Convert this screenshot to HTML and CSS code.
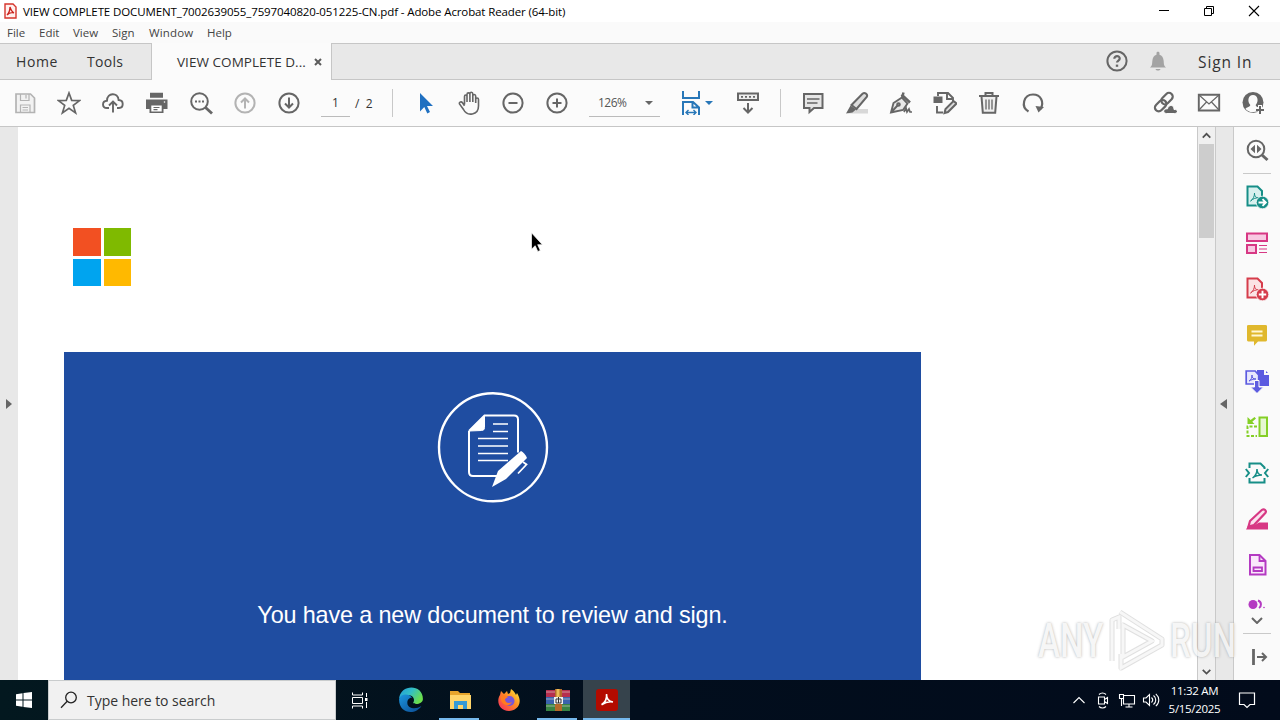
FILE: index.html
```html
<!DOCTYPE html>
<html lang="en">
<head>
<meta charset="UTF-8">
<meta name="viewport" content="width=device-width, initial-scale=1.0">
<title>VIEW COMPLETE DOCUMENT_7002639055_7597040820-051225-CN.pdf - Adobe Acrobat Reader (64-bit)</title>
<link rel="stylesheet" href="styles.css">
</head>
<body>
  <div class="screen">
    <!-- Title bar -->
    <header class="titlebar">
      <svg class="app-icon" viewBox="0 0 13 16" width="13" height="16"><path d="M1 1h8l3 3v11H1z" fill="#fff0ee" stroke="#d5352d" stroke-width="1.4"/><path d="M6 4c1 3 2 5 4 6-3-1-5 0-7 2 2-2 3-5 3-8z" fill="none" stroke="#c9221c" stroke-width="1.3"/></svg>
      <span class="title">VIEW COMPLETE DOCUMENT_7002639055_7597040820-051225-CN.pdf - Adobe Acrobat Reader (64-bit)</span>
      <div class="window-buttons">
        <svg viewBox="0 0 12 12"><path d="M1 5.5h10" stroke="#000"/></svg>
        <svg viewBox="0 0 12 12"><path d="M1.500 3.500h7v7h-7zM3.500 3.500v-2h7v7h-2" fill="none" stroke="#000"/></svg>
        <svg viewBox="0 0 12 12"><path d="M1 1l10 10M11 1L1 11" stroke="#000" stroke-width="1.100"/></svg>
      </div>
    </header>
    <nav class="menu">
      <span class="m-file">File</span>
      <span class="m-edit">Edit</span>
      <span class="m-view">View</span>
      <span class="m-sign">Sign</span>
      <span class="m-window">Window</span>
      <span class="m-help">Help</span>
    </nav>

    <!-- Tabs -->
    <div class="tabs">
      <span class="tab-home">Home</span>
      <span class="tab-tools">Tools</span>
      <div class="tab-active">
        <span class="tab-name">VIEW COMPLETE D...</span>
        <svg viewBox="0 0 8 8" width="8" height="8"><path d="M1 1l6 6M7 1L1 7" stroke="#5c5c5c" stroke-width="2"/></svg>
      </div>
      <div class="account">
        <svg class="icon" viewBox="0 0 24 24"><circle cx="12" cy="12" r="9.600"/><path d="M9.300 9.800c0-3.600 5.600-3.400 5.400-.2-.1 2-2.700 1.900-2.700 4" stroke-width="2.200"/><path d="M12 15.600v2.200" stroke-width="2.400"/></svg>
        <svg class="icon bell" viewBox="0 0 24 24"><path d="M4 18.500c2.500-2 2-4 2.400-7 .3-3 1.600-5 4.100-5.700V4c0-1.800 3-1.800 3 0v1.800c2.500.7 3.800 2.700 4.100 5.700.4 3-.1 5 2.400 7zM9.500 20h5c-.6 2-4.400 2-5 0z"/></svg>
        <span class="sign-in">Sign In</span>
      </div>
    </div>

    <!-- Toolbar -->
    <div class="toolbar">
      <div class="group">
        <svg class="icon pale" viewBox="0 0 24 24"><path d="M3 3h14.500L21.500 7V21.500H3z" fill="#f2f2f2" stroke-width="1.700"/><path d="M7.500 3v6.500h8.500V3M13 4v3.500M7.500 21.500V14H17v7.500M9.500 16.500h5.500M9.500 19h5.500" stroke-width="1.200"/></svg>
        <svg class="icon" viewBox="0 0 24 24"><path d="M12 2l2.700 7.400 7.900.2-6.300 4.800 2.300 7.500L12 17.400l-6.600 4.500 2.300-7.500L1.400 9.600l7.900-.2z" stroke-width="1.700"/></svg>
        <svg class="icon" viewBox="0 0 24 24"><path d="M8 17H6c-5.300-.2-5.300-7 0-7.300C6 1.500 17 1 17.600 9c5.500.2 5.300 7.800.4 8h-2M12 21.500V11M8 14.500l4-4 4 4" stroke-width="1.900"/></svg>
        <svg class="icon" viewBox="0 0 24 24"><path d="M5 1.800h13v5H5zM1 8.500h21.500V18H18.500v4H4.500v-4H1z" fill="#666" stroke="none"/><path d="M6.300 14.500h10.400v6H6.300z" fill="#fff" stroke="none"/><path d="M8.500 16.500h6M8.500 18.700h4" stroke-width="1.200"/><circle cx="19.500" cy="11" r=".8" fill="#fff" stroke="none"/></svg>
        <svg class="icon" viewBox="0 0 24 24"><circle cx="10.500" cy="10.500" r="8.300"/><path d="M16.500 16.500l6.500 6" stroke-width="2.800"/><path d="M6 10.500h2m1.500 0h2m1.500 0h2" stroke-width="2"/></svg>
        <svg class="icon pale" viewBox="0 0 24 24"><circle cx="12" cy="12" r="9.600"/><path d="M12 17.500v-10M8 11.500l4-4 4 4"/></svg>
        <svg class="icon" viewBox="0 0 24 24"><circle cx="12" cy="12" r="9.600"/><path d="M12 6.500v10M8 12.500l4 4 4-4"/></svg>
      </div>
      <span class="page-input">1</span>
      <span class="page-total">/&nbsp; 2</span>
      <i class="divider"></i>
      <div class="group group-view">
        <svg class="icon" viewBox="0 0 24 24"><path d="M7 2v18.500l4.300-4.500 3 6.400 2.700-1.300-3-6.100h6z" fill="#1f70c1" stroke="none"/></svg>
        <svg class="icon" viewBox="0 0 24 24"><path d="M7.500 13.500V5.500c0-2 2.500-2 2.500 0V11 3.500c0-2.200 2.900-2.200 2.900 0V11 2.800c0-2 2.900-2 2.900.2V11 5c0-2 2.900-2 2.900.2V12 8.500c0-2 2.800-2 2.800 0V15c0 9.500-11.500 10.500-15 3.500L2.500 13c-.7-2.300 2-2.700 3-1.200l2 3" stroke-width="1.600"/></svg>
        <svg class="icon" viewBox="0 0 24 24"><circle cx="12" cy="12" r="9.600"/><path d="M7.500 12h9"/></svg>
        <svg class="icon" viewBox="0 0 24 24"><circle cx="12" cy="12" r="9.600"/><path d="M7.500 12h9M12 7.500v9"/></svg>
      </div>
      <div class="zoom-level"><span>126%</span><i class="caret"></i></div>
      <div class="fit">
        <svg class="icon" viewBox="0 0 24 24"><g stroke="#2877b8"><path d="M4 0v7h16V0M4 24V11h10l6 5.500V24M13.500 11v5.500H20"/><path d="M7 21.500h10M9.500 19L7 21.500 9.500 24M14.500 19l2.500 2.500-2.500 2.500" stroke-width="1.400"/></g></svg>
        <i class="caret blue"></i>
      </div>
      <svg class="icon scroll-icon" viewBox="0 0 24 24"><path d="M2 2.500h20V9H2z" fill="#eee"/><path d="M5 5.800h14.500" stroke-dasharray="2 2" stroke-width="1.700"/><path d="M12 12v9M7.500 17l4.500 4.500 4.500-4.500"/></svg>
      <i class="divider divider-2"></i>
      <div class="group group-edit">
        <svg class="icon" viewBox="0 0 24 24"><path d="M3 3h18.500v14H13l-4.500 4V17H3z" fill="#e6e6e6"/><path d="M6 8h12.500M6 12h10.500" stroke-width="1.500"/></svg>
        <svg class="icon" viewBox="0 0 24 24"><path d="M8 18h15v4.500H3z" fill="#d8d8d8" stroke="none"/><path d="M6.500 14L17.500 2.800c2-1.800 5.800.2 4.200 3.200L11.500 18z" fill="#ddd" stroke-width="2"/><path d="M5.500 14.500l5.500 4L7.500 21.500 1 22.500z" fill="#666" stroke="none"/></svg>
        <svg class="icon" viewBox="0 0 24 24"><path d="M2 21.500L4.500 12l8.500-5.500 5.500 6-4.500 6.500zM2 21.500l6.500-7" stroke-width="1.900" fill="#e8e8e8"/><path d="M12.500 3.500l8.500 8M14.500 1.500L13 7" stroke-width="2.500"/><circle cx="9.500" cy="13.500" r="1.300"/><path d="M15 21l2-4 1 4 2-3 1 3h2" stroke-width="1.700"/></svg>
        <svg class="icon" viewBox="0 0 24 24"><path d="M5 5V2h10l5 5v3M14 2v6h5M4 15v6.500h6" stroke-width="1.900"/><path d="M.5 5.500h9V12h-9z" fill="#666" stroke="none"/><path d="M11.500 22l1-4 8-8 3 2.500-8.500 8.500z" fill="#ddd" stroke-width="2"/></svg>
        <svg class="icon" viewBox="0 0 24 24"><path d="M4.500 5.500l1.300 16.200h12.400l1.300-16.200M2 5h20M8.500 4.500V2h7v2.500" fill="#eee"/><path d="M9 8.500v10M12 8.500v10M15 8.500v10" stroke-width="1.300"/></svg>
        <svg class="icon" viewBox="0 0 24 24"><path d="M7.500 20.500C-.5 16 2.500 3.500 12 3.500c8 0 11.500 8 7.500 14.500" stroke-width="2.200"/><path d="M14.500 15l8.500 1-5.500 5.500z" fill="#666" stroke="none"/></svg>
      </div>
      <div class="group group-share">
        <svg class="icon" viewBox="0 0 24 24"><g transform="rotate(-45 11 11)"><rect x="-.500" y="7.500" width="13" height="7.500" rx="3.700" stroke-width="2.200"/><rect x="9" y="7" width="13" height="7.500" rx="3.700" stroke-width="2.200"/></g><path d="M13.500 22.500c-4.500-.3-3-5.500 1-4.700 1-5 7-4 6.500.7 4.500-.3 4.500 4 .5 4z" fill="#666" stroke="#fbfbfb" stroke-width="1"/></svg>
        <svg class="icon" viewBox="0 0 24 24"><path d="M1.800 3.700h20.400v15.800H1.800z" stroke-width="1.900"/><path d="M2 4l10 9 10-9M2 19l7.500-8M22 19l-7.500-8" stroke-width="1.200"/></svg>
        <svg class="icon" viewBox="0 0 24 24"><circle cx="12" cy="11.500" r="10.500" fill="#666" stroke="none"/><path d="M4.500 18c1-2.200 4.500-1.500 4.800-4C6 10.500 7 4 12 4s6 6.500 2.700 10c.2 1.500 1.300 1.900 2.500 2.200L15 20.500c-4 1.500-8 .5-10.500-2.500z" fill="#fbfbfb" stroke="none"/><path d="M19 14v9M14.500 18.500h9" stroke="#fbfbfb" stroke-width="4"/><path d="M19 15v8M15 19h8"/></svg>
      </div>
    </div>

    <!-- Document area -->
    <main class="workspace">
      <div class="gutter-left"><i class="arrow-right"></i></div>
      <div class="page">
        <div class="ms-logo"><i class="red"></i><i class="green"></i><i class="sky"></i><i class="yellow"></i></div>
        <section class="banner">
          <svg class="sign-doc" viewBox="0 0 112 112" width="112" height="112" fill="none" stroke="#fff">
            <circle cx="56" cy="55.300" r="54" stroke-width="2.400"/>
            <path d="M32 39l15.500-15.500H77c3 0 4 1 4 4v33M32 39v41c0 3 1 4 4 4h26" stroke-width="2"/>
            <path d="M32 39l15.500-15.500v12c0 2-1 3-3 3z" fill="#fff" stroke-width="1"/>
            <path d="M56 32h15M56 39.500h15M41 46.500h30M41 54h30M41 61.500h30M41 68.500h30" stroke-width="1.500"/>
            <path d="M55 95l6-16 23-20c2 1 5 4 6 7L69 87z" fill="#fff" stroke="none"/>
            <path d="M86 70l3.500 2.500-8.500 9" stroke-width="1.800"/>
          </svg>
          <p>You have a new document to review and sign.</p>
        </section>
        <svg class="cursor" viewBox="0 0 12 20" width="12" height="20"><path d="M.5.8v16.400l3.700-3.500 2.600 5.800 2.500-1.100-2.600-5.700h4.700z" fill="#000" stroke="#fff" stroke-width=".7"/></svg>
      </div>
      <div class="scrollbar">
        <svg viewBox="0 0 18 18"><path d="M4.500 11.200L8.500 7.200l4 4"/></svg>
        <i class="thumb"></i>
        <svg class="down" viewBox="0 0 18 18"><path d="M4.500 7.300l4 4 4-4"/></svg>
      </div>
      <div class="gutter-right"><i class="arrow-left"></i></div>
      <aside class="tools">
        <svg class="icon first" viewBox="0 0 24 24"><circle cx="11" cy="11" r="8.300"/><path d="M17 17l5.500 5" stroke-width="3"/><path d="M10 6.700v8.600L5.500 11zM12 6.700v8.600l4.500-4.300z" fill="#666" stroke="none"/></svg>
        <hr>
        <div class="tool-list">
          <svg class="icon teal" viewBox="0 0 24 24"><path d="M2.500 1.500h10L17 6v14.500H2.500z" fill="#d8f0ee"/><path d="M5.500 16c3-2 4-5 4-8 0 4 2 5 5 5-4-.5-6 .5-9 3z" stroke-width="1"/><circle cx="17.500" cy="17.500" r="6.300" fill="#168e87" stroke="#fafafa" stroke-width=".8"/><path d="M13.500 17.500H20M17.500 14.200l3.300 3.300-3.300 3.300" stroke="#fff" stroke-width="1.900"/></svg>
          <svg class="icon pink" viewBox="0 0 24 24"><path d="M2 2.500h20v7.500H2zM2 14h9v8H2z" fill="#f8c9e2"/><path d="M14 14.500h8M14 18h8M14 21.500h8" stroke-width="1.200"/></svg>
          <svg class="icon coral" viewBox="0 0 24 24"><path d="M2.500 1.500h10L17 6v14.500H2.500z" fill="#fbe3e4"/><path d="M5.500 16c3-2 4-5 4-8 0 4 2 5 5 5-4-.5-6 .5-9 3z" stroke-width="1"/><circle cx="17.500" cy="17.500" r="6.300" fill="#d63c4b" stroke="#fafafa" stroke-width=".8"/><path d="M13.800 17.500h7.400M17.500 13.800v7.400" stroke="#fff" stroke-width="1.900"/></svg>
          <svg class="icon" viewBox="0 0 24 24"><path d="M3.500 2h17C22 2 22 3 22 3v14s0 1.500-1.500 1.500H13L9 22.700v-4.200H3.500C2 18.500 2 17 2 17V3s0-1 1.500-1z" fill="#e0b82d" stroke="none"/><path d="M6.500 8.500h11M6.500 12.500h11" stroke="#fff7d5" stroke-width="1.800"/></svg>
          <svg class="icon" viewBox="0 0 24 24"><path d="M12 1h8l4 4v12H12z" fill="#5c5be0" stroke="none"/><path d="M20 1v4h4" stroke="#fafafa"/><path d="M1.200 2h9l3.500 4v9H1.200z" fill="#e8e8fc" stroke="#5c5be0" stroke-width="1.700"/><path d="M4 12c2-1 3-3 3-6 0 3 1 4 4 4-3 0-5 1-7 2z" stroke="#5c5be0" stroke-width="1"/><path d="M9.500 11.500H14V18h4.500L12 24.500 5.500 18h4z" fill="#5c5be0" stroke="#fafafa" stroke-width="1"/></svg>
          <svg class="icon lime" viewBox="0 0 24 24"><path d="M14.500 2.500H22v18.500h-7.500z" fill="#e6f7d2"/><path d="M12 11.500H2.500v9.500H12" stroke-dasharray="3 1.500"/><path d="M2.500 2v7h7L7.300 6.700 11 3.500 9.500 2 5.600 5z" fill="#84cf26" stroke="none"/></svg>
          <svg class="icon teal" viewBox="0 0 24 24"><path d="M4.500 7V2.500h11l4 4V8M4.500 17v4.500h15V17" stroke-width="2"/><path d="M7.500 17c3-2 4.500-5 4.500-9 0 4 2 6 5 6-4 0-7 1-9.500 3z" stroke-width="1.500"/><path d="M.8 8L4 12 .8 16M23.200 8L20 12l3.200 4" stroke-width="2"/></svg>
          <svg class="icon pink" viewBox="0 0 24 24"><path d="M1 22.500L4 17l5 1.500 5-3h9v7z" fill="#d73884" stroke="none"/><path d="M5 14L17 2.800c2.200-1.500 5 1 3.300 3.200L9 18l-5.500 1.500z" fill="#fbe3ef" stroke-width="2.200"/></svg>
          <svg class="icon violet" viewBox="0 0 24 24"><path d="M5 2h9.500l6 6v13.500H5z" fill="#fae7fb"/><path d="M14.500 2v6h6M8.500 14.500h8.500v3.500H8.500z" stroke-width="1.800"/></svg>
        </div>
        <svg class="partial" viewBox="0 0 24 10" width="24" height="10"><circle cx="8" cy="5.500" r="4.500" fill="#b43ac2"/><path d="M13 1.500c4 1.500 3.500 6 1 7.500" fill="none" stroke="#b43ac2" stroke-width="2"/><circle cx="19" cy="8.500" r=".8" fill="#b43ac2"/></svg>
        <svg class="chevron" viewBox="0 0 12 7" width="12" height="7"><path d="M1 1l5 5 5-5" fill="none" stroke="#666" stroke-width="2"/></svg>
        <hr>
        <svg class="icon last" viewBox="0 0 24 24"><path d="M8.500 4v16" stroke-width="2.800"/><path d="M12 12h8.500M17 8l4 4-4 4" stroke-width="2"/></svg>
      </aside>

      <div class="watermark">
        <span>ANY</span>
        <svg viewBox="0 0 58 64" width="58" height="64"><path d="M5 53V12l7-3v12M13 4l42 27v6L14 60V46M16 17l29 16-29 16z" fill="none" stroke="#d9d9d9" stroke-width="5" stroke-linejoin="round"/><path d="M5 53V12l7-3v12M13 4l42 27v6L14 60V46M16 17l29 16-29 16z" fill="none" stroke="#f6f6f6" stroke-width="3"/></svg>
        <span>RUN</span>
      </div>
    </main>

    <!-- Windows taskbar -->
    <footer class="taskbar">
      <div class="start"><svg viewBox="0 0 16 16" width="16" height="16" fill="#fff"><path d="M0 2.300L6.500 1.300v6.200H0zM7.500 1.100L16 0v7.500H7.500zM0 8.500h6.500v6.200L0 13.700zM7.500 8.500H16V16l-8.500-1.100z"/></svg></div>
      <div class="search">
        <svg viewBox="0 0 18 18" width="18" height="18" fill="none" stroke="#222" stroke-width="1.300"><circle cx="11" cy="6.500" r="5.300"/><path d="M7.200 10.300L1 16.700"/></svg>
        <span>Type here to search</span>
      </div>
      <div class="apps">
        <div class="app"><svg class="taskview" viewBox="0 0 18 18" width="18" height="18" fill="none" stroke="#fff"><path d="M1.500 6.500h10v6h-10zM1.500 1.500v2.500h10V1.500M1.500 17.500V15h10v2.500M15.500 2v4M15.500 11v6"/><path d="M14 7h2.500v3H14z" fill="#fff" stroke="none"/></svg></div>
        <div class="app">
          <svg viewBox="0 0 24 24" width="26" height="26">
            <defs>
              <linearGradient id="edgeTop" x1="0" y1="0" x2="1" y2=".5"><stop offset="0" stop-color="#229bd8"/><stop offset=".5" stop-color="#32bec7"/><stop offset="1" stop-color="#6bdf4c"/></linearGradient>
              <linearGradient id="edgeLow" x1="0" y1="0" x2="1" y2="1"><stop offset="0" stop-color="#1b96df"/><stop offset="1" stop-color="#0b4a91"/></linearGradient>
            </defs>
            <path d="M1 11C2-3 23-3 23 11c0 5-8 5.500-9 3.500 2-3 0-7-4-7-5 0-8 1.500-9 3.500z" fill="url(#edgeTop)"/>
            <path d="M1 11c1.500-5.500 10-5 12-1-5-1-7 9 1 9.500 3 .2 5-.5 7.500-2C17 26 .5 25.500 1 11z" fill="url(#edgeLow)"/>
          </svg>
        </div>
        <div class="app running"><svg viewBox="0 0 24 24" width="24" height="24"><path d="M2 3h8l2 2h10v15H2z" fill="#e7a52c"/><path d="M2 7h21v14H2z" fill="#ffd56a"/><path d="M6 21v-8h13v8h-4v-4h-5v4z" fill="#369ad5"/></svg></div>
        <div class="app">
          <svg viewBox="0 0 24 24" width="24" height="24">
            <defs><linearGradient id="fox" x1="1" y1="0" x2="0" y2="1"><stop offset="0" stop-color="#fff33c"/><stop offset=".45" stop-color="#ff8b24"/><stop offset="1" stop-color="#f42364"/></linearGradient></defs>
            <path d="M3 7l1-4 3 3 3-3 1 3 2-1 1-4c3 2 4 4 5 6l1-2c7 11-1 18-8 18C2 23-1 13 3 7z" fill="url(#fox)"/>
            <circle cx="12.500" cy="13" r="5" fill="#7656d9"/><path d="M4 8c3-2 5 0 7 1l-3 2c0 4 4 5 7 3-4 7-13 1-11-6z" fill="#ff7b20"/>
          </svg>
        </div>
        <div class="app running"><svg viewBox="0 0 24 24" width="24" height="24"><path d="M0 2h24v7H0z" fill="#b62e4e"/><path d="M0 9h24v7H0z" fill="#3b63ad"/><path d="M0 16h24v7H0z" fill="#388344"/><path d="M0 4h24M0 11h24M0 18h24" stroke="#ded9d1" opacity=".6"/><path d="M9 1h7v22H9z" fill="#b46a2a"/><path d="M10.500 1h3v8h-3z" fill="#eabc57"/><path d="M8 9h9v7H8z" fill="#eee"/><path d="M10 11h5v4h-5zM12.500 9v6" stroke="#333" fill="none"/></svg></div>
        <div class="app running active"><svg viewBox="0 0 22 22" width="22" height="22"><rect width="22" height="22" rx="3" fill="#b30b00"/><path d="M10.500 5c0 5 2.500 7.500 6.500 8-4-.7-7.500.2-11.500 2.700C9 13.500 11 9.500 10.500 5z" fill="none" stroke="#fff" stroke-width="1.600"/></svg></div>
      </div>
      <div class="tray">
        <svg viewBox="0 0 18 18"><path d="M3.500 12L9 6.500l5.500 5.500"/></svg>
        <svg viewBox="0 0 18 18"><path d="M4.500 6h6v7h-6zM10.500 8.500l3-2v6l-3-2M5 3.500c2-2 5-2 7 0M5 15.500c2 2 5 2 7 0"/></svg>
        <svg viewBox="0 0 18 18"><path d="M5.500 4.500h11v8.500h-11V8M11 13v3M7.500 16h7M1.500 3.500h4v4h-4zM3.500 7.500V15"/></svg>
        <svg viewBox="0 0 18 18"><path d="M1.500 7H4l3.500-3.500v11L4 11H1.500zM9.500 6.500c1.500 1.500 1.500 3.500 0 5M11.500 4.500c3 2.500 3 6.500 0 9M13.800 2.800c4 3.500 4 9 0 12.400"/></svg>
      </div>
      <div class="clock"><span>11:32 AM</span><span>5/15/2025</span></div>
      <svg class="notice" viewBox="0 0 18 18" width="18" height="18" fill="none" stroke="#fff" stroke-width="1.200"><path d="M1.500 2h15v11.500H12l-3 3-3-3H1.500z"/></svg>
    </footer>
  </div>
</body>
</html>
```

FILE: styles.css
```css
* {
  box-sizing: border-box;
}

body {
  margin: 0;
  font-family: "Open Sans", "Noto Sans", sans-serif;
  color: #333;
}

.screen {
  width: 1280px;
  height: 720px;
  overflow: hidden;
  display: flex;
  flex-direction: column;
  background: #fff;
  white-space: nowrap;
}

svg {
  display: block;
  flex-shrink: 0;
}

.icon {
  width: 24px;
  height: 24px;
  fill: none;
  stroke: #666;
  stroke-width: 2;
}

.icon.pale {
  stroke: #b3b3b3;
}

/* Title bar and menu */
.titlebar {
  height: 22px;
  display: flex;
  align-items: center;
  padding-left: 4px;
  color: #000;
}

.title {
  margin-left: 6px;
  font-size: 11.5px;
  letter-spacing: -0.115px;
}

.window-buttons {
  display: flex;
  gap: 33px;
  margin-left: auto;
  padding-right: 20px;
}

.window-buttons svg {
  width: 12px;
  height: 12px;
}

.menu {
  height: 21px;
  display: flex;
  align-items: center;
  padding-left: 7px;
  background: #fafafa;
  font-size: 11.5px;
  color: #444;
}

.m-file { width: 32px; }
.m-edit { width: 34px; }
.m-view { width: 39px; }
.m-sign { width: 37px; }
.m-window { width: 58px; letter-spacing: 0.15px; }

/* Tabs */
.tabs {
  height: 37px;
  display: flex;
  align-items: center;
  background: #e8e8e8;
  border-top: 1px solid #c6c6c6;
  border-bottom: 1px solid #c6c6c6;
  font-size: 14px;
}

.tab-home {
  width: 71px;
  margin-left: 16px;
  letter-spacing: 0.6px;
}

.tab-tools {
  width: 64px;
  letter-spacing: 0.3px;
}

.tab-active {
  width: 181px;
  height: 37px;
  display: flex;
  align-items: center;
  padding-left: 25px;
  background: #fbfbfb;
  border: solid #c6c6c6;
  border-width: 0 1px;
}

.tab-name {
  width: 137px;
  font-size: 13.5px;
  letter-spacing: 0.05px;
}

.account {
  display: flex;
  align-items: center;
  gap: 17px;
  margin-left: auto;
  padding-right: 26px;
}

.account .icon {
  margin: 0 1px 2px -1px;
}

.icon.bell {
  fill: #a3a3a3;
  stroke: none;
}

.sign-in {
  width: 57px;
  margin-left: 10px;
  margin-right: -1px;
  font-size: 15.5px;
  letter-spacing: 0.9px;
}

/* Toolbar */
.toolbar {
  height: 47px;
  display: flex;
  align-items: center;
  padding-left: 3px;
  background: #fbfbfb;
  border-bottom: 1px solid #c6c6c6;
}

.group {
  display: flex;
}

.group .icon {
  margin: 0 10px;
}

.page-input {
  width: 29px;
  height: 28px;
  margin-left: 10px;
  border-bottom: 1px solid #bbb;
  text-align: center;
  font-size: 12px;
  line-height: 28px;
}

.page-total {
  width: 37px;
  margin-left: 5px;
  font-size: 12px;
}

.divider {
  width: 1px;
  height: 28px;
  margin-left: 0;
  background: #c8c8c8;
}

.group-view {
  margin-left: 10px;
}

.zoom-level {
  width: 71px;
  height: 28px;
  display: flex;
  align-items: center;
  justify-content: space-between;
  margin-left: 10px;
  padding: 0 7px 0 9px;
  border-bottom: 1px solid #bbb;
  font-size: 12px;
  color: #555;
}

.zoom-level span {
  letter-spacing: -0.5px;
}

.caret {
  border: 4px solid transparent;
  border-top: 4px solid #666;
  border-bottom: 0;
}

.caret.blue {
  border-top-color: #2877b8;
}

.fit {
  width: 54px;
  display: flex;
  align-items: center;
  gap: 2px;
  margin-left: 19px;
}

.scroll-icon {
  margin-left: 3px;
}

.divider-2 {
  margin-left: 20px;
}

.group-edit {
  margin-left: 10px;
}

.group-share {
  margin-left: auto;
  padding-right: 5px;
}

/* Document area */
.workspace {
  position: relative;
  height: 553px;
  display: flex;
}

.gutter-left,
.gutter-right {
  width: 18px;
  display: flex;
  align-items: center;
  padding-left: 6px;
  background: #e8e8e8;
}

.gutter-right {
  width: 19px;
  padding-left: 4px;
  border: solid #c9c9c9;
  border-width: 0 1px;
}

.arrow-right,
.arrow-left {
  border: 5.5px solid transparent;
}

.arrow-right {
  border-left: 6px solid #666;
  border-right: 0;
}

.arrow-left {
  border-right: 7px solid #666;
  border-left: 0;
}

.page {
  position: relative;
  width: 1179px;
  padding: 101px 0 0 46px;
  background: #fff;
}

.ms-logo {
  width: 58px;
  height: 58px;
  display: grid;
  grid-template-columns: 27.5px 27.5px;
  gap: 3px;
  margin-left: 9px;
}

.red { background: #f25022; }
.green { background: #7fba00; }
.sky { background: #00a4ef; }
.yellow { background: #ffb900; }

.banner {
  width: 857px;
  height: 328px;
  display: flex;
  flex-direction: column;
  align-items: center;
  margin-top: 66px;
  padding-top: 40px;
  background: #1f4da1;
}

.banner p {
  margin: 97px 0 0;
  font-family: "Liberation Sans", Arial, sans-serif;
  font-size: 23.4px;
  letter-spacing: -0.14px;
  line-height: 28px;
  color: #fff;
}

.cursor {
  position: absolute;
  left: 513px;
  top: 105px;
}

.scrollbar {
  width: 18px;
  display: flex;
  flex-direction: column;
  background: #f0f0f0;
  border-left: 1px solid #c9c9c9;
}

.scrollbar svg {
  width: 18px;
  height: 17px;
  fill: none;
  stroke: #505050;
  stroke-width: 1.8;
}

.thumb {
  width: 15px;
  height: 94px;
  margin-left: 1px;
  background: #cdcdcd;
}

.scrollbar .down {
  margin-top: auto;
}

.tools {
  width: 46px;
  display: flex;
  flex-direction: column;
  align-items: center;
  padding-top: 11px;
  background: #fafafa;
}

.tools hr {
  width: 28px;
  height: 1px;
  margin: 11px 0;
  border: 0;
  background: #c9c9c9;
}

.tool-list {
  display: flex;
  flex-direction: column;
  gap: 22px;
}

.teal { stroke: #168e87; }
.pink { stroke: #d73884; }
.coral { stroke: #d63c4b; }
.lime { stroke: #84cf26; }
.violet { stroke: #b43ac2; }

.partial {
  margin-top: 22px;
}

.chevron {
  margin-top: 8px;
}

.tools .chevron + hr {
  margin: 9px 0 11px;
}

.watermark {
  position: absolute;
  left: 1038px;
  top: 481px;
  width: 196px;
  display: flex;
  align-items: center;
  justify-content: space-between;
  opacity: 0.8;
  font-family: "Roboto", sans-serif;
  font-size: 48px;
  font-weight: 500;
  color: #f4f4f4;
  text-shadow: 0 0 3px #999;
}

.watermark span {
  width: 64px;
  transform: scaleX(0.69);
  transform-origin: left;
}

/* Taskbar */
.taskbar {
  height: 40px;
  display: flex;
  align-items: center;
  background: linear-gradient(90deg, #03181f, #020e1d 50%, #020b1b);
  color: #fff;
}

.start {
  width: 48px;
  padding-left: 16px;
}

.search {
  width: 288px;
  height: 40px;
  display: flex;
  align-items: center;
  gap: 9px;
  padding-left: 11px;
  background: #f1f1f1;
  border: 1px solid #c9cccd;
  font-size: 14px;
  letter-spacing: -0.03px;
  color: #333;
}

.apps {
  display: flex;
}

.app {
  width: 49px;
  height: 40px;
  display: flex;
  align-items: center;
  justify-content: center;
  padding-left: 2px;
}

.app.running {
  background: linear-gradient(#76b9ed, #76b9ed) 5px bottom / 40px 2px no-repeat;
}

.app.active {
  background: linear-gradient(#76b9ed, #76b9ed) 2px bottom / 48px 2px no-repeat, linear-gradient(#36434c, #36434c) 2px top / 48px 40px no-repeat;
}

.taskview {
  margin-left: -4px;
}

.tray {
  display: flex;
  gap: 6px;
  margin-left: auto;
}

.tray svg {
  width: 18px;
  height: 18px;
  fill: none;
  stroke: #fff;
  stroke-width: 1.1;
}

.clock {
  width: 67px;
  display: flex;
  flex-direction: column;
  align-items: center;
  margin-left: 1px;
  font-size: 11.5px;
  line-height: 18px;
  letter-spacing: -0.3px;
}

.notice {
  margin: 0 24px 0 10px;
}
```
